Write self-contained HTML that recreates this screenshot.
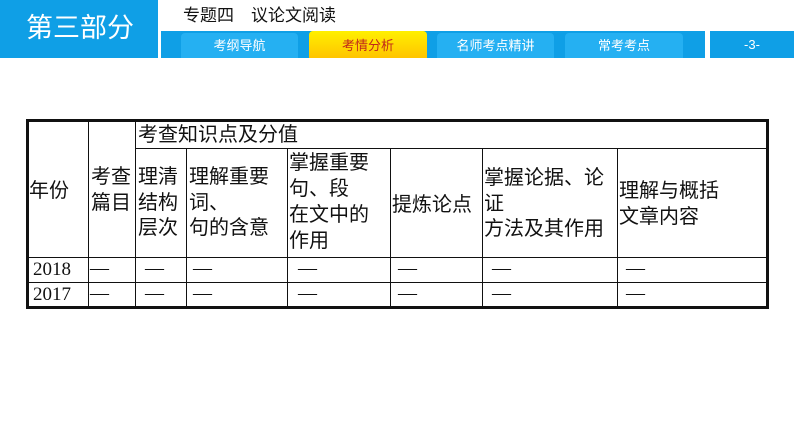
<!DOCTYPE html>
<html><head><meta charset="utf-8"><style>
*{margin:0;padding:0;box-sizing:border-box}
body{width:794px;height:447px;background:#fff;position:relative;overflow:hidden;font-family:"Liberation Sans","Noto Sans CJK SC",sans-serif}
.a{position:absolute}
.bl{background:#0f9fe6}
.tab{position:absolute;top:33px;height:25px;border-radius:4px 4px 0 0;background:#25b0f2;color:#fff;font-size:13px;text-align:center;line-height:25px}
.h{position:absolute;background:#111}
.t{position:absolute;font-size:20px;line-height:25.5px;color:#111;white-space:nowrap}
.y{position:absolute;font-family:"Liberation Serif",serif;font-size:19px;color:#111}
.d{position:absolute;font-family:"Liberation Serif",serif;font-size:19px;color:#111}
</style></head><body>
<div class="a bl" style="left:0;top:0;width:158px;height:58px"></div>
<div class="a" style="left:26px;top:10px;color:#fff;font-size:27px;line-height:36px">第三部分</div>
<div class="a" style="left:183px;top:5px;font-size:17px;line-height:22px;color:#111">专题四　议论文阅读</div>
<div class="a bl" style="left:161px;top:31px;width:544px;height:27px"></div>
<div class="tab" style="left:181px;width:117px">考纲导航</div>
<div class="tab" style="left:309px;width:118px;background:linear-gradient(#fff000,#ffc400);color:#c0281a;top:31px;height:27px;line-height:29px">考情分析</div>
<div class="tab" style="left:437px;width:117px">名师考点精讲</div>
<div class="tab" style="left:565px;width:118px">常考考点</div>
<div class="a bl" style="left:710px;top:31px;width:84px;height:27px;color:#fff;font-size:13px;text-align:center;line-height:27px">-3-</div>

<div class="h" style="left:26px;top:119px;width:743px;height:3px"></div>
<div class="h" style="left:26px;top:306px;width:743px;height:3px"></div>
<div class="h" style="left:26px;top:119px;width:3px;height:190px"></div>
<div class="h" style="left:766px;top:119px;width:3px;height:190px"></div>
<div class="h" style="left:135px;top:148px;width:633px;height:1px"></div>
<div class="h" style="left:26px;top:257px;width:742px;height:1px"></div>
<div class="h" style="left:26px;top:282px;width:742px;height:1px"></div>
<div class="h" style="left:88px;top:120px;width:1px;height:188px"></div>
<div class="h" style="left:135px;top:120px;width:1px;height:188px"></div>
<div class="h" style="left:186px;top:148px;width:1px;height:160px"></div>
<div class="h" style="left:287px;top:148px;width:1px;height:160px"></div>
<div class="h" style="left:390px;top:148px;width:1px;height:160px"></div>
<div class="h" style="left:482px;top:148px;width:1px;height:160px"></div>
<div class="h" style="left:617px;top:148px;width:1px;height:160px"></div>

<div class="t" style="left:138px;top:123px">考查知识点及分值</div>
<div class="t" style="left:29px;top:179px">年份</div>
<div class="t" style="left:91px;top:165px">考查<br>篇目</div>
<div class="t" style="left:138px;top:165px">理清<br>结构<br>层次</div>
<div class="t" style="left:189px;top:165px">理解重要<br>词、<br>句的含意</div>
<div class="t" style="left:289px;top:150px;line-height:26px">掌握重要<br>句、段<br>在文中的<br>作用</div>
<div class="t" style="left:392px;top:193px">提炼论点</div>
<div class="t" style="left:484px;top:166px">掌握论据、论<br>证<br>方法及其作用</div>
<div class="t" style="left:619px;top:179px">理解与概括<br>文章内容</div>

<div class="y" style="left:33px;top:259px">2018</div>
<div class="y" style="left:33px;top:284px">2017</div>
<div class="d" style="left:90px;top:258px">—</div><div class="d" style="left:90px;top:283px">—</div>
<div class="d" style="left:145px;top:258px">—</div><div class="d" style="left:145px;top:283px">—</div>
<div class="d" style="left:193px;top:258px">—</div><div class="d" style="left:193px;top:283px">—</div>
<div class="d" style="left:298px;top:258px">—</div><div class="d" style="left:298px;top:283px">—</div>
<div class="d" style="left:398px;top:258px">—</div><div class="d" style="left:398px;top:283px">—</div>
<div class="d" style="left:492px;top:258px">—</div><div class="d" style="left:492px;top:283px">—</div>
<div class="d" style="left:626px;top:258px">—</div><div class="d" style="left:626px;top:283px">—</div>
</body></html>
